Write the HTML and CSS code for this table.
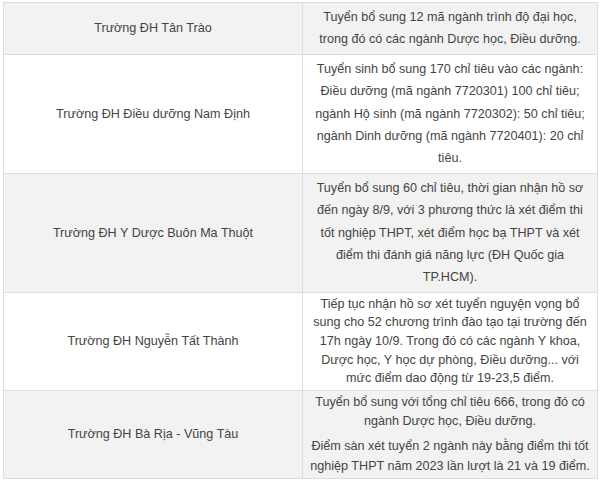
FILE: index.html
```html
<!DOCTYPE html>
<html>
<head>
    <title>Tuyển sinh bổ sung</title>
    <link rel="stylesheet" href="styles.css">
</head>
<body>
    <table class="schools">
        <tr class="shade">
            <td class="name">Trường ĐH Tân Trào</td>
            <td class="info">Tuyển bổ sung 12 mã ngành trình độ đại học, trong đó có các ngành Dược học, Điều dưỡng.</td>
        </tr>
        <tr>
            <td class="name">Trường ĐH Điều dưỡng Nam Định</td>
            <td class="info">Tuyển sinh bổ sung 170 chỉ tiêu vào các ngành: Điều dưỡng (mã ngành 7720301) 100 chỉ tiêu; ngành Hộ sinh (mã ngành 7720302): 50 chỉ tiêu; ngành Dinh dưỡng (mã ngành 7720401): 20 chỉ tiêu.</td>
        </tr>
        <tr class="shade">
            <td class="name">Trường ĐH Y Dược Buôn Ma Thuột</td>
            <td class="info">Tuyển bổ sung 60 chỉ tiêu, thời gian nhận hồ sơ đến ngày 8/9, với 3 phương thức là xét điểm thi tốt nghiệp THPT, xét điểm học bạ THPT và xét điểm thi đánh giá năng lực (ĐH Quốc gia TP.HCM).</td>
        </tr>
        <tr class="tight">
            <td class="name">Trường ĐH Nguyễn Tất Thành</td>
            <td class="info">Tiếp tục nhận hồ sơ xét tuyển nguyện vọng bổ sung cho 52 chương trình đào tạo tại trường đến 17h ngày 10/9. Trong đó có các ngành Y khoa, Dược học, Y học dự phòng, Điều dưỡng... với mức điểm dao động từ 19-23,5 điểm.</td>
        </tr>
        <tr class="shade tight last">
            <td class="name">Trường ĐH Bà Rịa - Vũng Tàu</td>
            <td class="info">
                <p>Tuyển bổ sung với tổng chỉ tiêu 666, trong đó có ngành Dược học, Điều dưỡng.</p>
                <p>Điểm sàn xét tuyển 2 ngành này bằng điểm thi tốt nghiệp THPT năm 2023 lần lượt là 21 và 19 điểm.</p>
            </td>
        </tr>
    </table>
</body>
</html>
```

FILE: styles.css
```css
body {
    margin: 0;
    padding: 2px 3px;
    font-family: "Liberation Sans", Arial, sans-serif;
    background-color: #fff;
}
.schools {
    width: 595px;
    border-collapse: collapse;
    font-size: 12.6px;
    color: #444;
}
.schools td {
    border: 1px solid #ddd;
    text-align: center;
    vertical-align: middle;
    line-height: 22.4px;
    padding: 3px 8px;
}
.schools .name {
    width: 282px;
}
.shade {
    background-color: #f2f2f2;
}
.tight td {
    line-height: 18.6px;
    padding: 2px 8px;
}
.last td {
    line-height: 19.6px;
}
.last .info {
    padding: 2px 3px;
}
.info p {
    margin: 0 0 5px;
}
.info p:last-child {
    margin-bottom: 0;
}
```
